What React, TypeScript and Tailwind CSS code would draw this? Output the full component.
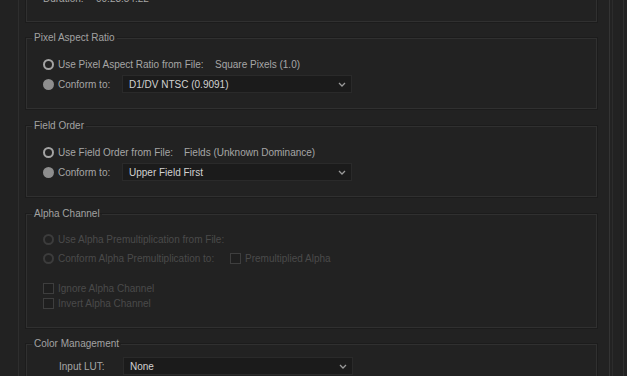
import React from 'react';

// Interpret Footage – lower part of the dialog (dark theme)

const Radio: React.FC<{ filled?: boolean; dim?: boolean }> = ({ filled, dim }) => {
  if (dim) {
    return <span className="block w-[11px] h-[11px] rounded-full border-2 border-[#3c3c3c] shrink-0" />;
  }
  return filled ? (
    <span className="block w-[11px] h-[11px] rounded-full bg-[#8e8e8e] shrink-0" />
  ) : (
    <span className="block w-[11px] h-[11px] rounded-full border-2 border-[#a4a4a4] shrink-0" />
  );
};

const Check: React.FC = () => (
  <span className="block w-[11px] h-[11px] border border-[#3e3e3e] bg-[#1f1f1f] shrink-0" />
);

const Dropdown: React.FC<{ value: string }> = ({ value }) => (
  <div className="flex items-center justify-between w-[230px] h-[18px] bg-[#1b1b1b] border border-[#2a2a2a] pl-[6px] pr-[5px]">
    <span className="text-[#d2d2d2]">{value}</span>
    <svg width="8" height="5" viewBox="0 0 8 5" fill="none">
      <path d="M1 1l3 3 3-3" stroke="#9a9a9a" strokeWidth="1.3" />
    </svg>
  </div>
);

const Panel: React.FC<{ title: string; children: React.ReactNode; className?: string }> = ({
  title,
  children,
  className = '',
}) => (
  <fieldset className={`border border-[#303030] px-[5px] shadow-[0_0_0_1px_#1c1c1c] ${className}`}>
    <legend className="px-[2px] leading-[14px] text-[#a2a2a2]">{title}</legend>
    {children}
  </fieldset>
);

export default function App() {
  return (
    <div
      className="flex w-[627px] h-[376px] overflow-hidden bg-[#222222] text-[10px] text-[#a6a6a6]"
      style={{ fontFamily: '"Liberation Sans", Arial, sans-serif' }}
    >
      <div className="w-[18px] shrink-0" />
      <div className="w-[579px] shrink-0 border-l border-[#2e2e2e] pl-[7px] flex flex-col">
        {/* Source clip info (cut off at top) */}
        <div className="h-[40px] mt-[-18px] border border-[#303030] shadow-[0_0_0_1px_#1c1c1c] flex items-end pb-[15px] pl-[16px] leading-[14px] shrink-0">
          <span className="w-[53px]">Duration:</span>
          <span>00:23:54:22</span>
        </div>

        {/* Pixel Aspect Ratio */}
        <Panel title="Pixel Aspect Ratio" className="mt-[9px] pb-[14px] shrink-0">
          <div className="pl-[11px] pt-[9px]">
            <div className="flex items-center h-[20px] gap-[4px]">
              <Radio />
              <span className="w-[153px]">Use Pixel Aspect Ratio from File:</span>
              <span>Square Pixels (1.0)</span>
            </div>
            <div className="flex items-center h-[20px]">
              <Radio filled />
              <span className="w-[64px] ml-[4px]">Conform to:</span>
              <Dropdown value="D1/DV NTSC (0.9091)" />
            </div>
          </div>
        </Panel>

        {/* Field Order */}
        <Panel title="Field Order" className="mt-[10px] pb-[14px] shrink-0">
          <div className="pl-[11px] pt-[9px]">
            <div className="flex items-center h-[20px] gap-[4px]">
              <Radio />
              <span className="w-[122px]">Use Field Order from File:</span>
              <span>Fields (Unknown Dominance)</span>
            </div>
            <div className="flex items-center h-[20px]">
              <Radio filled />
              <span className="w-[64px] ml-[4px]">Conform to:</span>
              <Dropdown value="Upper Field First" />
            </div>
          </div>
        </Panel>

        {/* Alpha Channel (disabled) */}
        <Panel title="Alpha Channel" className="mt-[10px] pb-[16px] shrink-0">
          <div className="pl-[11px] pt-[9px] text-[#4a4a4a]">
            <div className="flex items-center h-[19px] gap-[4px]">
              <Radio dim />
              <span>Use Alpha Premultiplication from File:</span>
            </div>
            <div className="flex items-center h-[19px] gap-[4px]">
              <Radio dim />
              <span className="w-[168px]">Conform Alpha Premultiplication to:</span>
              <Check />
              <span>Premultiplied Alpha</span>
            </div>
            <div className="flex items-center h-[15px] gap-[4px] mt-[13px]">
              <Check />
              <span>Ignore Alpha Channel</span>
            </div>
            <div className="flex items-center h-[15px] gap-[4px]">
              <Check />
              <span>Invert Alpha Channel</span>
            </div>
          </div>
        </Panel>

        {/* Color Management */}
        <Panel title="Color Management" className="mt-[9px] pb-[14px] shrink-0">
          <div className="pl-[27px] pt-[6px]">
            <div className="flex items-center h-[18px]">
              <span className="w-[64px]">Input LUT:</span>
              <Dropdown value="None" />
            </div>
          </div>
        </Panel>
      </div>

      {/* right edge: scroll track lines */}
      <div className="w-[12px] shrink-0" />
      <div className="w-[3px] shrink-0 border-l border-[#343434]" />
      <div className="w-[11px] shrink-0 border-l border-[#2c2c2c]" />
      <div className="flex-1 border-l border-[#303030]" />
    </div>
  );
}
